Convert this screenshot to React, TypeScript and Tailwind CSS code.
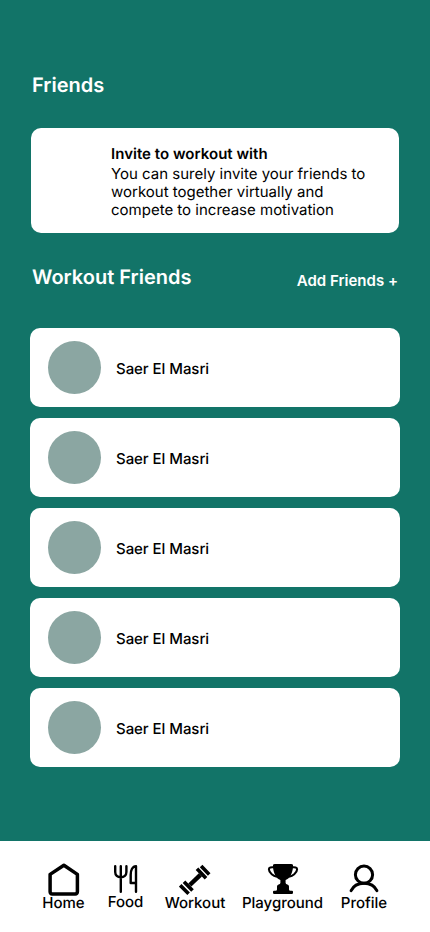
import type { ReactNode } from "react";

const friends = ["Saer El Masri", "Saer El Masri", "Saer El Masri", "Saer El Masri", "Saer El Masri"];

function HomeIcon() {
  return (
    <svg width="32" height="34" viewBox="0 0 32 34" fill="none" stroke="black" strokeWidth="3.5" strokeLinejoin="round">
      <path d="M2.1 12.4 L15.9 3.2 L29.4 12.4 V29.6 Q29.4 32 27.2 32 H4.3 Q2.1 32 2.1 29.6 Z" />
    </svg>
  );
}

function FoodIcon() {
  return (
    <svg width="24" height="34" viewBox="0 0 24 34" fill="none" stroke="black" strokeWidth="2.4" strokeLinecap="round" strokeLinejoin="round">
      <path d="M1.2 5.2 V11 C1.2 14.2 3.5 16.3 6.8 16.3 S12.4 14.2 12.4 11 V5.2 M6.8 5.2 V30.8" />
      <path d="M22 30.8 V5.2 C18.4 5.2 16.7 9.5 16.7 14 V22 H22" />
    </svg>
  );
}

function DumbbellIcon() {
  return (
    <svg width="32" height="34" viewBox="0 0 32 34" fill="none" stroke="black" strokeWidth="3.6">
      <path d="M10.8 23 L21.4 12.8" strokeWidth="4.5" />
      <path d="M18 6.8 L27 16.2 M22.1 3.9 L30.2 12.4" />
      <path d="M1.2 23.3 L9.6 31.8 M5 19.7 L13.5 28.6" />
    </svg>
  );
}

function TrophyIcon() {
  return (
    <svg width="32" height="34" viewBox="0 0 32 34" fill="black">
      <path d="M6 3.1 Q6.2 2 8 2 H24 Q25.8 2 26 3.1 V5 C25.6 11 23 16.5 18.6 18 V21 Q18.8 22 20.4 22.5 Q22 23 22 24.5 V27.4 Q22 28.6 23.5 28.7 H25 Q26 28.7 26 29.8 V30.8 Q26 32 24.8 32 H7.2 Q6 32 6 30.8 V29.8 Q6 28.7 7 28.7 H8.5 Q10 28.6 10 27.4 V24.5 Q10 23 11.6 22.5 Q13.2 22 13.4 21 V18 C9 16.5 6.4 11 6 5 Z" />
      <path d="M7 5.3 C4 5 1.9 5.3 1.9 7.2 C2 11.2 6.6 14 10 14.8 M25 5.3 C28 5 30.1 5.3 30.1 7.2 C30 11.2 25.4 14 22 14.8" fill="none" stroke="black" strokeWidth="2.1" />
    </svg>
  );
}

function ProfileIcon() {
  return (
    <svg width="32" height="34" viewBox="0 0 32 34" fill="none" stroke="black" strokeWidth="3" strokeLinecap="round">
      <circle cx="16" cy="12.7" r="8.6" />
      <path d="M3.1 28.7 C5.2 24.2 10 21.3 16 21.3 S26.8 24.2 28.9 28.7" />
    </svg>
  );
}

function NavItem({ label, icon, className }: { label: string; icon: ReactNode; className: string }) {
  return (
    <a className={`flex shrink-0 flex-col items-center whitespace-nowrap ${className}`}>
      {icon}
      <span className="-mt-0.5 text-[15px] leading-[18px]">{label}</span>
    </a>
  );
}

export default function App() {
  return (
    <div className="flex h-[932px] w-[430px] flex-col overflow-hidden bg-[#127468] font-['Inter',sans-serif] text-black [text-rendering:geometricPrecision]">
      <main className="flex flex-1 flex-col px-[30px] pt-[73px]">
        <h1 className="pl-0.5 text-xl leading-6 font-semibold text-white">Friends</h1>

        <section className="mx-px mt-[31px] h-[105px] rounded-[10px] bg-white pt-[17px] pl-20">
          <h2 className="text-[15px] leading-[18px] font-semibold tracking-[0.03px]">Invite to workout with</h2>
          <p className="mt-0.5 w-[265px] text-[15px] leading-[18px]">
            You can surely invite your friends to workout together virtually and compete to increase motivation
          </p>
        </section>

        <div className="mt-8 flex items-start justify-between px-0.5 text-white">
          <h2 className="text-xl leading-6 font-semibold">Workout Friends</h2>
          <button className="mt-[7px] text-[15px] leading-[18px] font-semibold">Add Friends +</button>
        </div>

        <ul className="mt-[38px] flex flex-col gap-[11px]">
          {friends.map((name, i) => (
            <li key={i} className="flex h-[79px] items-center rounded-[10px] bg-white pl-[18px]">
              <span className="size-[53px] rounded-full bg-[#8ba6a2]" />
              <span className="ml-[15px] pt-0.5 text-[15px] leading-[18px] font-medium tracking-[-0.05px]">{name}</span>
            </li>
          ))}
        </ul>
      </main>

      <nav className="flex h-[91px] items-start bg-white pt-[21px] pl-[42px] font-medium">
        <NavItem label="Home" icon={<HomeIcon />} className="w-[43px]" />
        <NavItem label="Food" icon={<FoodIcon />} className="-mt-px ml-[22.5px] w-9" />
        <NavItem label="Workout" icon={<DumbbellIcon />} className="ml-[21.5px] w-[60px]" />
        <NavItem label="Playground" icon={<TrophyIcon />} className="ml-[17px] w-[81px]" />
        <NavItem label="Profile" icon={<ProfileIcon />} className="ml-[18px] w-[46px]" />
      </nav>
    </div>
  );
}
